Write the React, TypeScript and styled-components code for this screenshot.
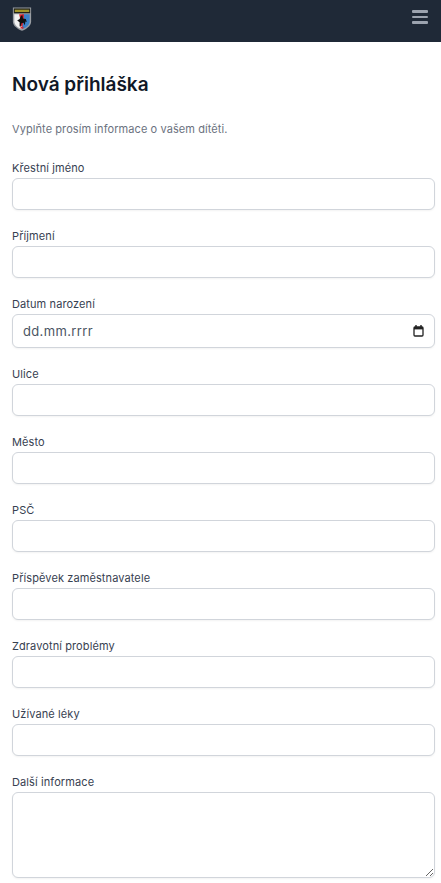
import React from 'react';
import styled, {createGlobalStyle} from 'styled-components';

const GlobalStyle = createGlobalStyle`
  html, body {
    margin: 0;
    padding: 0;
    background: #fff;
    height: 883px;
    overflow: hidden;
  }
  * {
    box-sizing: border-box;
  }
`;

const FONT = `Inter, 'Open Sans', 'Liberation Sans', sans-serif`;

const Page = styled.div`
  font-family: ${FONT};
  color: #111827;
`;

const Navbar = styled.header`
  height: 42px;
  background: #1f2937;
  display: flex;
  align-items: flex-start;
  justify-content: space-between;
  padding: 7px 13px 0 12px;
`;

const MenuButton = styled.button`
  border: 0;
  background: none;
  padding: 3px 0 0;
  width: 16px;
  display: flex;
  flex-direction: column;
  gap: 3px;
  cursor: pointer;
`;

const MenuBar = styled.span`
  display: block;
  height: 2.6px;
  border-radius: 1px;
  background: #9ca3af;
`;

const Main = styled.main`
  padding: 30px 6px 0 12px;
`;

const Title = styled.h1`
  margin: 0;
  font-size: 19px;
  line-height: 26px;
  font-weight: 600;
  letter-spacing: 0;
  color: #111827;
`;

const Intro = styled.p`
  margin: 23px 0 0;
  font-size: 11px;
  line-height: 16px;
  font-weight: 400;
  letter-spacing: 0.08px;
  color: #6b7280;
`;

const Form = styled.form`
  margin-top: 21px;
  display: flex;
  flex-direction: column;
  gap: 16px;
`;

const Field = styled.label`
  display: block;
`;

const LabelText = styled.span`
  display: block;
  font-size: 11px;
  line-height: 20px;
  font-weight: 400;
  letter-spacing: 0.1px;
  color: #374151;
`;

const boxStyles = `
  display: block;
  width: 100%;
  background: #fff;
  border: 1px solid #d1d5db;
  border-radius: 6px;
  box-shadow: 0 1px 2px rgba(0, 0, 0, 0.05);
  outline: none;
`;

const TextInput = styled.input`
  ${boxStyles}
  height: 32px;
`;

const DateBox = styled.div`
  ${boxStyles}
  height: 34px;
  display: flex;
  align-items: center;
  justify-content: space-between;
  padding: 0 10px;
  font-size: 13px;
  letter-spacing: 0.35px;
  color: #4b5563;
`;

const TextArea = styled.textarea`
  ${boxStyles}
  height: 86px;
  resize: vertical;
`;

function Crest() {
  return (
    <svg width="20" height="24" viewBox="0 0 20 25" aria-hidden="true">
      <path d="M0.5 0.5H19.5V15C19.5 20 14 23 10 24.8C6 23 0.5 20 0.5 15Z" fill="#9a9ea3" />
      <rect x="1.5" y="1.5" width="17" height="5" fill="#23241a" />
      <rect x="2.5" y="2.8" width="15" height="2.4" fill="#a3972a" />
      <path d="M2 7.5H10V23C6 21.5 2 19 2 15Z" fill="#f2f2f2" />
      <path d="M10 7.5H18V15C18 19 14 21.5 10 23Z" fill="#3b82c9" />
      <path d="M7 7.5H12V11L10.5 20H8.5L8 12Z" fill="#d8262c" />
      <path d="M5 14L7.5 12.5L9 9L10.5 8.5L11 12L14 12.5L15 15.5L13.5 15L13 19L11.5 16.5L9.5 17L8.5 20.5L7.5 20L7.5 16Z" fill="#111" />
      <rect x="8.5" y="20.5" width="3" height="2" fill="#d8262c" />
    </svg>
  );
}

function CalendarIcon() {
  return (
    <svg width="11" height="12" viewBox="0 0 11 12" aria-hidden="true">
      <path d="M3 0V2M8 0V2" stroke="#222" strokeWidth="1.4" />
      <rect x="1" y="2" width="9" height="9" rx="1" fill="none" stroke="#222" strokeWidth="1.3" />
      <rect x="1" y="2" width="9" height="2.4" fill="#222" />
    </svg>
  );
}

const topFields = ['Křestní jméno', 'Příjmení'];
const bottomFields = [
  'Ulice',
  'Město',
  'PSČ',
  'Příspěvek zaměstnavatele',
  'Zdravotní problémy',
  'Užívané léky',
];

export default function App() {
  return (
    <Page>
      <GlobalStyle />
      <Navbar>
        <Crest />
        <MenuButton type="button" aria-label="Menu">
          <MenuBar />
          <MenuBar />
          <MenuBar />
        </MenuButton>
      </Navbar>
      <Main>
        <Title>Nová přihláška</Title>
        <Intro>Vyplňte prosím informace o vašem dítěti.</Intro>
        <Form>
          {topFields.map(label => (
            <Field key={label}>
              <LabelText>{label}</LabelText>
              <TextInput type="text" />
            </Field>
          ))}
          <Field>
            <LabelText>Datum narození</LabelText>
            <DateBox>
              dd.mm.rrrr
              <CalendarIcon />
            </DateBox>
          </Field>
          {bottomFields.map(label => (
            <Field key={label}>
              <LabelText>{label}</LabelText>
              <TextInput type="text" />
            </Field>
          ))}
          <Field>
            <LabelText>Další informace</LabelText>
            <TextArea />
          </Field>
        </Form>
      </Main>
    </Page>
  );
}
